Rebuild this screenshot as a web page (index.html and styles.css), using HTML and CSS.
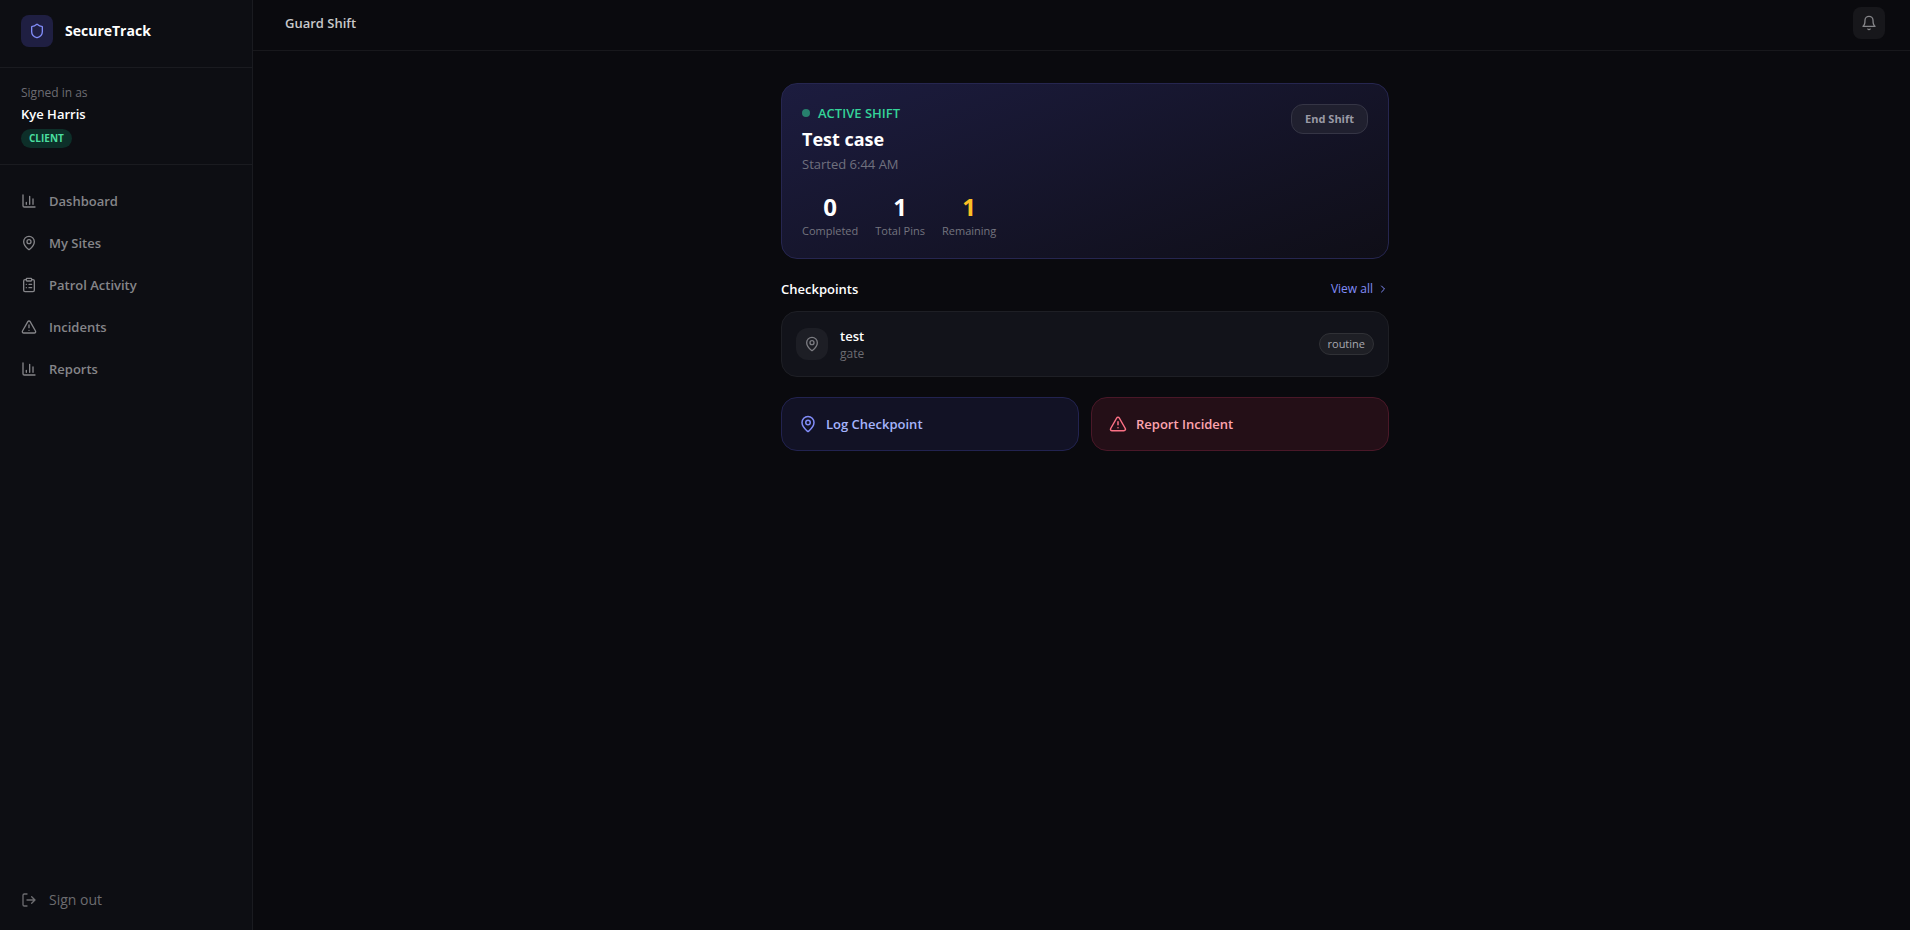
FILE: index.html
```html
<!DOCTYPE html>
<html lang="en">
<head>
<meta charset="utf-8">
<title>SecureTrack</title>
<link rel="stylesheet" href="styles.css">
</head>
<body>
<svg width="0" height="0" class="sprite" aria-hidden="true">
  <symbol id="chart" viewBox="0 0 24 24"><path d="M3 3v16a2 2 0 0 0 2 2h16M18 17V9M13 17V5M8 17v-3"/></symbol>
  <symbol id="pin" viewBox="0 0 24 24"><path d="M20 10c0 4.993-5.539 10.193-7.399 11.799a1 1 0 0 1-1.202 0C9.539 20.193 4 14.993 4 10a8 8 0 0 1 16 0"/><circle cx="12" cy="10" r="3"/></symbol>
  <symbol id="clipboard" viewBox="0 0 24 24"><rect x="8" y="2" width="8" height="4" rx="1"/><path d="M16 4h2a2 2 0 0 1 2 2v14a2 2 0 0 1-2 2H6a2 2 0 0 1-2-2V6a2 2 0 0 1 2-2h2M12 11h4M12 16h4M8 11h.01M8 16h.01"/></symbol>
  <symbol id="alert" viewBox="0 0 24 24"><path d="m21.73 18-8-14a2 2 0 0 0-3.48 0l-8 14A2 2 0 0 0 4 21h16a2 2 0 0 0 1.73-3M12 9v4M12 17h.01"/></symbol>
  <symbol id="shield" viewBox="0 0 24 24"><path d="M20 13c0 5-3.5 7.5-7.66 8.95a1 1 0 0 1-.67-.01C7.5 20.5 4 18 4 13V6a1 1 0 0 1 1-1c2 0 4.5-1.2 6.24-2.72a1.17 1.17 0 0 1 1.52 0C14.51 3.81 17 5 19 5a1 1 0 0 1 1 1z"/></symbol>
  <symbol id="bell" viewBox="0 0 24 24"><path d="M6 8a6 6 0 0 1 12 0c0 7 3 9 3 9H3s3-2 3-9M10.3 21a1.94 1.94 0 0 0 3.4 0"/></symbol>
  <symbol id="logout" viewBox="0 0 24 24"><path d="M9 21H5a2 2 0 0 1-2-2V5a2 2 0 0 1 2-2h4M16 17l5-5-5-5M21 12H9"/></symbol>
  <symbol id="chevron" viewBox="0 0 24 24"><path d="m9 18 6-6-6-6"/></symbol>
</svg>
<div class="app">
  <aside class="sidebar">
    <div class="brand">
      <span class="brand-mark"><svg class="icon"><use href="#shield"/></svg></span>
      <span class="brand-name">SecureTrack</span>
    </div>
    <div class="user">
      <span class="user-label">Signed in as</span>
      <span class="user-name">Kye Harris</span>
      <span class="role">CLIENT</span>
    </div>
    <nav class="nav">
      <a class="nav-item" href="#dashboard"><svg class="icon"><use href="#chart"/></svg>Dashboard</a>
      <a class="nav-item" href="#sites"><svg class="icon"><use href="#pin"/></svg>My Sites</a>
      <a class="nav-item" href="#patrol"><svg class="icon"><use href="#clipboard"/></svg>Patrol Activity</a>
      <a class="nav-item" href="#incidents"><svg class="icon"><use href="#alert"/></svg>Incidents</a>
      <a class="nav-item" href="#reports"><svg class="icon"><use href="#chart"/></svg>Reports</a>
    </nav>
    <button class="signout" type="button"><svg class="icon"><use href="#logout"/></svg>Sign out</button>
  </aside>
  <div class="main">
    <header class="topbar">
      <h1 class="page-title">Guard Shift</h1>
      <button class="bell" type="button" aria-label="Notifications"><svg class="icon"><use href="#bell"/></svg></button>
    </header>
    <main class="content">
      <div class="column">
        <section class="shift">
          <div class="shift-head">
            <div>
              <p class="status"><span class="dot"></span>ACTIVE SHIFT</p>
              <h2 class="shift-name">Test case</h2>
              <p class="started">Started 6:44 AM</p>
            </div>
            <button class="end" type="button">End Shift</button>
          </div>
          <div class="stats">
            <div class="stat"><span class="value">0</span><span class="label">Completed</span></div>
            <div class="stat"><span class="value">1</span><span class="label">Total Pins</span></div>
            <div class="stat"><span class="value amber">1</span><span class="label">Remaining</span></div>
          </div>
        </section>
        <section class="checkpoints">
          <div class="section-head">
            <h2 class="section-title">Checkpoints</h2>
            <a class="view-all" href="#checkpoints">View all<svg class="icon small"><use href="#chevron"/></svg></a>
          </div>
          <article class="checkpoint">
            <span class="checkpoint-mark"><svg class="icon"><use href="#pin"/></svg></span>
            <div class="checkpoint-text">
              <h3 class="checkpoint-name">test</h3>
              <p class="checkpoint-place">gate</p>
            </div>
            <span class="tag">routine</span>
          </article>
        </section>
        <div class="actions">
          <button class="action log" type="button"><svg class="icon large"><use href="#pin"/></svg>Log Checkpoint</button>
          <button class="action report" type="button"><svg class="icon large"><use href="#alert"/></svg>Report Incident</button>
        </div>
      </div>
    </main>
  </div>
</div>
</body>
</html>
```
FILE: styles.css
```css
* { box-sizing: border-box; margin: 0; }
body {
  background: #0a0a0e;
  color: #fff;
  font: 13px/20px "Segoe UI", "Open Sans", "Noto Sans", sans-serif;
}
button { font: inherit; color: inherit; cursor: pointer; }
a { color: inherit; text-decoration: none; }
.sprite { position: absolute; }
.icon {
  width: 16px; height: 16px; flex: none;
  fill: none; stroke: currentColor; stroke-width: 2;
  stroke-linecap: round; stroke-linejoin: round;
}
.icon.small { width: 12px; height: 12px; }
.icon.large { width: 18px; height: 18px; }

.app { display: flex; min-height: 100vh; }
.sidebar {
  display: flex; flex-direction: column;
  width: 253px; flex: none;
  background: #0d0e13;
  border-right: 1px solid #1a1b20;
}
.brand {
  display: flex; align-items: center; gap: 12px;
  padding: 15px 21px 20px;
  border-bottom: 1px solid #1a1b20;
}
.brand-mark {
  display: grid; place-items: center;
  width: 32px; height: 32px; border-radius: 8px;
  background: #1f1f42; color: #818cf8;
}
.brand-name { font-size: 14px; font-weight: 700; }
.user {
  display: flex; flex-direction: column; align-items: flex-start;
  padding: 16px 21px;
  border-bottom: 1px solid #1a1b20;
}
.user-label { font-size: 12px; line-height: 18px; color: #6c6c72; }
.user-name { font-weight: 600; line-height: 24px; }
.role {
  margin-top: 3px; padding: 2px 8px; border-radius: 10px;
  font-size: 10px; line-height: 15px; font-weight: 700;
  background: #0d2f29; color: #4ade9f;
}
.nav { display: flex; flex-direction: column; gap: 2px; padding: 16px 0; flex: 1; }
.nav-item {
  display: flex; align-items: center; gap: 12px;
  padding: 10px 21px; font-weight: 600; color: #858589;
}
.signout {
  display: flex; align-items: center; gap: 12px;
  margin-bottom: 10px; padding: 10px 21px;
  background: none; border: 0; color: #6c6c70; text-align: left;
  font-size: 14px;
}

.main { display: flex; flex-direction: column; flex: 1; min-width: 0; }
.topbar {
  display: flex; align-items: center; justify-content: space-between;
  padding: 7px 25px 11px 32px;
  border-bottom: 1px solid #18181c;
}
.page-title { font-size: 13px; font-weight: 600; color: #c8c8ca; }
.bell {
  display: grid; place-items: center;
  width: 32px; height: 32px; padding: 0;
  border: 0; border-radius: 8px;
  background: #17171b; color: #858589;
}
.content { padding: 32px 25px 32px 32px; }
.column { display: flex; flex-direction: column; gap: 20px; max-width: 608px; margin: 0 auto; }

.shift {
  display: flex; flex-direction: column; gap: 17px;
  padding: 20px 20px 19px; border: 1px solid #262650; border-radius: 16px;
  background: linear-gradient(160deg, #1c1c3f, #0f0e17);
}
.shift-head { display: flex; justify-content: space-between; align-items: flex-start; }
.status {
  display: flex; align-items: center; gap: 8px; margin-bottom: 3px;
  font-size: 13px; line-height: 18px; font-weight: 600; color: #34d399;
}
.dot { width: 8px; height: 8px; border-radius: 50%; background: #27806d; }
.shift-name { font-size: 18px; line-height: 28px; font-weight: 700; }
.started { margin-top: 1px; color: #70707e; }
.end {
  padding: 6px 13px; border: 1px solid #353545; border-radius: 12px;
  background: #20202f; color: #9a9aa5;
  font-size: 11px; line-height: 16px; font-weight: 700;
}
.stats { display: flex; gap: 17px; }
.stat { display: flex; flex-direction: column; align-items: center; }
.value { font-size: 24px; line-height: 32px; font-weight: 700; }
.amber { color: #fbbf24; }
.label { font-size: 11px; line-height: 16px; color: #74747f; }

.checkpoints { display: flex; flex-direction: column; gap: 12px; }
.section-head { display: flex; align-items: center; justify-content: space-between; }
.section-title { font-size: 13px; font-weight: 600; }
.view-all { display: flex; align-items: center; gap: 4px; font-size: 12px; color: #818cf8; }
.checkpoint {
  display: flex; align-items: center; gap: 12px;
  padding: 14px; border: 1px solid #1e1f25; border-radius: 16px;
  background: #12131a;
}
.checkpoint-mark {
  display: grid; place-items: center;
  width: 32px; height: 32px; border-radius: 12px;
  background: #1d1e25; color: #7c7c82;
}
.checkpoint-text { flex: 1; }
.checkpoint-name { font-size: 13px; font-weight: 600; }
.checkpoint-place { font-size: 12px; line-height: 16px; color: #6c6c72; }
.tag {
  padding: 2px 8px; border: 1px solid #303136; border-radius: 11px;
  background: #1e1f25; color: #a9a9b0; font-size: 11px; line-height: 16px;
}
.actions { display: grid; grid-template-columns: 1fr 1fr; gap: 12px; }
.action {
  display: flex; align-items: center; gap: 9px;
  padding: 16px 17px; border: 1px solid; border-radius: 16px;
  font-weight: 600; text-align: left;
}
.log { background: #121225; border-color: #222350; color: #a5b4fc; }
.log .icon { color: #818cf8; }
.report { background: #240f17; border-color: #4a1828; color: #fda4af; }
.report .icon { color: #fb7185; }
```
